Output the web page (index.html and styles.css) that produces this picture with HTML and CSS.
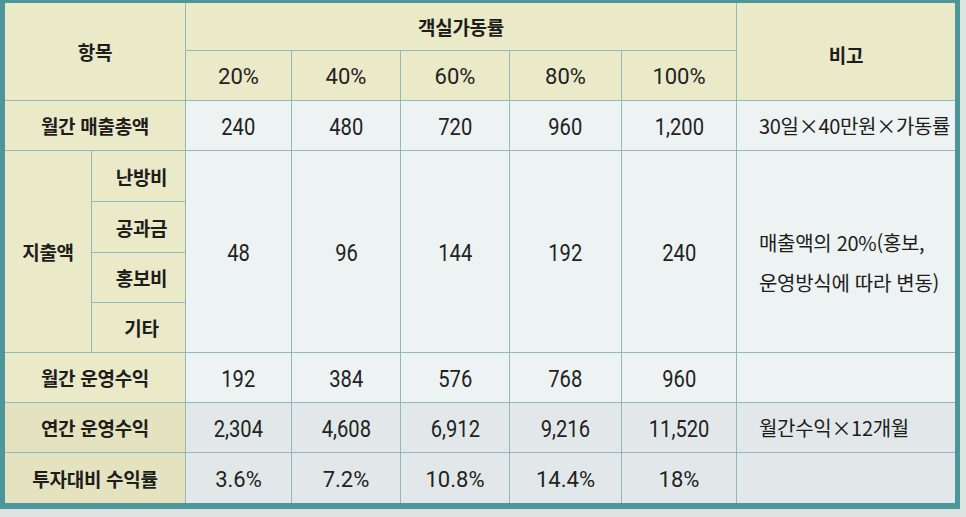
FILE: index.html
```html
<!DOCTYPE html>
<html lang="ko">
<head>
<meta charset="utf-8">
<title>객실가동률별 운영수익</title>
<link rel="stylesheet" href="styles.css">
</head>
<body>
<div class="frame">
  <div class="grid">
    <div class="c hd lbl" style="grid-column:1/3;grid-row:1/3">항목</div>
    <div class="c hd lbl" style="grid-column:3/8;grid-row:1">객실가동률</div>
    <div class="c hd lbl note-h" style="grid-column:8;grid-row:1/3">비고</div>
    <div class="c hd pct">20%</div>
    <div class="c hd pct">40%</div>
    <div class="c hd pct">60%</div>
    <div class="c hd pct">80%</div>
    <div class="c hd pct">100%</div>

    <div class="c hd lbl" style="grid-column:1/3">월간 매출총액</div>
    <div class="c dt num"><span class="n">240</span></div>
    <div class="c dt num"><span class="n">480</span></div>
    <div class="c dt num"><span class="n">720</span></div>
    <div class="c dt num"><span class="n">960</span></div>
    <div class="c dt num"><span class="n">1,200</span></div>
    <div class="c dt note">30일×40만원×가동률</div>

    <div class="c hd lbl" style="grid-column:1;grid-row:4/8">지출액</div>
    <div class="c hd lbl sub" style="grid-column:2;grid-row:4">난방비</div>
    <div class="c dt num" style="grid-column:3;grid-row:4/8"><span class="n">48</span></div>
    <div class="c dt num" style="grid-column:4;grid-row:4/8"><span class="n">96</span></div>
    <div class="c dt num" style="grid-column:5;grid-row:4/8"><span class="n">144</span></div>
    <div class="c dt num" style="grid-column:6;grid-row:4/8"><span class="n">192</span></div>
    <div class="c dt num" style="grid-column:7;grid-row:4/8"><span class="n">240</span></div>
    <div class="c dt note two" style="grid-column:8;grid-row:4/8">매출액의 20%(홍보,<br>운영방식에 따라 변동)</div>
    <div class="c hd lbl sub" style="grid-column:2;grid-row:5">공과금</div>
    <div class="c hd lbl sub" style="grid-column:2;grid-row:6">홍보비</div>
    <div class="c hd lbl sub" style="grid-column:2;grid-row:7">기타</div>

    <div class="c hd lbl" style="grid-column:1/3">월간 운영수익</div>
    <div class="c dt num"><span class="n">192</span></div>
    <div class="c dt num"><span class="n">384</span></div>
    <div class="c dt num"><span class="n">576</span></div>
    <div class="c dt num"><span class="n">768</span></div>
    <div class="c dt num"><span class="n">960</span></div>
    <div class="c dt note"></div>

    <div class="c hd lbl low" style="grid-column:1/3">연간 운영수익</div>
    <div class="c dt low num"><span class="n">2,304</span></div>
    <div class="c dt low num"><span class="n">4,608</span></div>
    <div class="c dt low num"><span class="n">6,912</span></div>
    <div class="c dt low num"><span class="n">9,216</span></div>
    <div class="c dt low num"><span class="n">11,520</span></div>
    <div class="c dt low note">월간수익×12개월</div>

    <div class="c hd lbl low" style="grid-column:1/3">투자대비 수익률</div>
    <div class="c dt low pct">3.6%</div>
    <div class="c dt low pct">7.2%</div>
    <div class="c dt low pct">10.8%</div>
    <div class="c dt low pct">14.4%</div>
    <div class="c dt low pct">18%</div>
    <div class="c dt low note"></div>
  </div>
</div>
</body>
</html>
```

FILE: styles.css
```css
html, body {
  margin: 0;
  padding: 0;
}
body {
  width: 966px;
  height: 517px;
  overflow: hidden;
  background: #dfe3e2;
  font-family: "Roboto", "Noto Sans CJK KR", sans-serif;
  color: #1d1d1b;
}
.frame {
  width: 950px;
  border-style: solid;
  border-color: #4c979c;
  border-width: 3px 5px 6px 5px;
  background: #8fb6b9;
}
.grid {
  display: grid;
  grid-template-columns: 86px 93px 105px 108px 108px 111px 114px 218px;
  grid-template-rows: 47px 49px 49px 50px 50px 49px 49px 49px 49px 50px;
  gap: 1px;
  background: #93b8bb;
}
.c {
  display: flex;
  align-items: center;
  justify-content: center;
  white-space: nowrap;
}
.hd {
  background: #eae9c8;
}
.hd.low {
  background: #e4e2bf;
}
.dt {
  background: #edf2f3;
}
.dt.low {
  background: #e2e8e9;
}
.lbl {
  font-family: "Noto Sans CJK KR", sans-serif;
  font-weight: 700;
  font-size: 19px;
  letter-spacing: -0.3px;
}
.sub {
  padding-left: 6px;
}
.note-h {
  padding-top: 6px;
}
.num {
  font-family: "Roboto", sans-serif;
  font-size: 24px;
  font-weight: 400;
  color: #222;
  padding-top: 2px;
}
.n {
  display: inline-block;
  transform: scaleX(0.84);
}
.pct {
  font-family: "Roboto", sans-serif;
  font-size: 22px;
  font-weight: 400;
  color: #222;
  padding-top: 2px;
}
.note {
  justify-content: flex-start;
  padding-left: 22px;
  font-family: "Noto Sans CJK KR", sans-serif;
  font-size: 20px;
  letter-spacing: -0.3px;
}
.two {
  line-height: 40px;
  padding-top: 22px;
  align-items: center;
}
```
